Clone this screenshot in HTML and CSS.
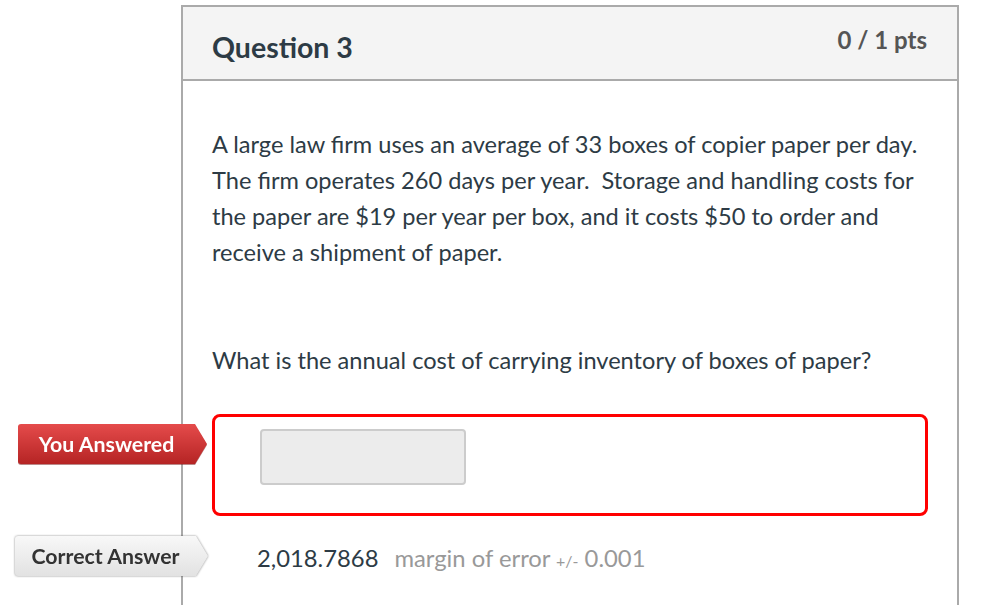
FILE: index.html
```html
<!DOCTYPE html>
<html lang="en">
<head>
<meta charset="utf-8">
<title>Question 3</title>
<link rel="stylesheet" href="styles.css">
</head>
<body>
<div class="card">
  <div class="card-header">
    <h2 class="title">Question 3</h2>
    <div class="pts">0 / 1 pts</div>
  </div>
  <div class="card-body">
    <p class="text">A large law firm uses an average of 33 boxes of copier paper per day. The firm operates 260 days per year.&nbsp; Storage and handling costs for the paper are $19 per year per box, and it costs $50 to order and receive a shipment of paper.</p>
    <p class="text question">What is the annual cost of carrying inventory of boxes of paper?</p>
    <div class="answers">
      <div class="answer wrong">
        <div class="tag-wrap wrong-tag"><span class="tag">You Answered</span></div>
        <div class="answer-box"><div class="input"></div></div>
      </div>
      <div class="answer correct">
        <div class="tag-wrap correct-tag"><span class="tag">Correct Answer</span></div>
        <div class="value"><span class="num">2,018.7868</span><span class="margin">margin of error <small>+/-</small> 0.001</span></div>
      </div>
    </div>
  </div>
</div>
</body>
</html>
```
FILE: styles.css
```css
html, body {
  margin: 0;
  padding: 0;
  background: #fff;
  font-family: Lato, "Open Sans", "Liberation Sans", sans-serif;
  color: #2d3b45;
}

.card {
  margin: 5px 0 0 181px;
  width: 778px;
  box-sizing: border-box;
  border: 2px solid #aaaaaa;
  border-bottom: none;
  min-height: 700px;
}

.card-header {
  display: flex;
  justify-content: space-between;
  align-items: flex-start;
  height: 72px;
  background: #f4f4f4;
  border-bottom: 2px solid #aaaaaa;
  padding: 0 30px 0 29px;
}

.title {
  margin: 23px 0 0;
  font-size: 28.5px;
  font-weight: 700;
  line-height: 1.2;
  color: #2d3b45;
}

.pts {
  margin-top: 19px;
  font-size: 24px;
  font-weight: 700;
  line-height: 1.2;
  color: #555555;
}

.card-body {
  padding: 45px 29px 0 29px;
}

.text {
  margin: 0;
  font-size: 23.6px;
  line-height: 36px;
  color: #2d3b45;
}

.question {
  margin-top: 72px;
}

.answers {
  margin-top: 36px;
}

.answer {
  position: relative;
}

.answer-box {
  width: 716px;
  height: 102px;
  box-sizing: border-box;
  border: 3px solid #ff0000;
  border-radius: 8px;
  padding: 12px 0 0 45px;
}

.input {
  width: 206px;
  height: 56px;
  box-sizing: border-box;
  background: #ececec;
  border: 2px solid #cccccc;
  border-radius: 4px;
}

.correct {
  margin-top: 20px;
}

.value {
  padding: 4px 0 0 45px;
  font-size: 23.8px;
  line-height: 36px;
  display: flex;
  gap: 16px;
}

.num {
  color: #2d3b45;
}

.margin {
  color: #999999;
}

.margin small {
  font-size: 16px;
}

.tag-wrap {
  position: absolute;
}

.wrong-tag {
  left: -194px;
  top: 10px;
  filter: drop-shadow(0 1px 0 rgba(120, 20, 20, 0.5));
}

.correct-tag {
  left: -197px;
  top: 0;
  filter: drop-shadow(0 0 1px rgba(0, 0, 0, 0.45));
}

.tag {
  display: flex;
  align-items: center;
  justify-content: center;
  height: 40px;
  box-sizing: border-box;
  padding-right: 12px;
  border-radius: 3px 0 0 3px;
  clip-path: polygon(0 0, calc(100% - 12px) 0, 100% 50%, calc(100% - 12px) 100%, 0 100%);
  font-size: 21.3px;
  font-weight: 700;
  white-space: nowrap;
}

.wrong-tag .tag {
  width: 189px;
  color: #ffffff;
  background: linear-gradient(#e54b4b, #b52424);
}

.correct-tag .tag {
  width: 193px;
  color: #333333;
  background: linear-gradient(#f8f8f8, #e2e2e2);
}
```
